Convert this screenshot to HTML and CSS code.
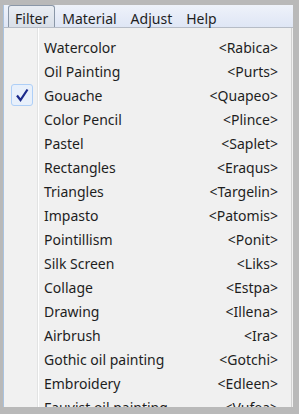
FILE: index.html
```html
<html>
  <head>
    <title>Filter menu</title>
    <link rel="stylesheet" href="styles.css">
  </head>
  <body>
    <div class="window">
      <div class="menubar">
        <span class="menubar_item menubar_open">Filter</span>
        <span class="menubar_item">Material</span>
        <span class="menubar_item">Adjust</span>
        <span class="menubar_item">Help</span>
      </div>
      <div class="menu">
        <div class="menu_row"><span class="menu_check"></span><span class="menu_label">Watercolor</span><span class="menu_key">&lt;Rabica&gt;</span></div>
        <div class="menu_row"><span class="menu_check"></span><span class="menu_label">Oil Painting</span><span class="menu_key">&lt;Purts&gt;</span></div>
        <div class="menu_row"><span class="menu_check menu_checked">
          <svg width="14" height="14" viewBox="0 0 14 14"><path d="M2 7.5 L5.5 12 L12.5 1.5" fill="none" stroke="#1c2a8c" stroke-width="2.2" stroke-linejoin="miter"/></svg>
        </span><span class="menu_label">Gouache</span><span class="menu_key">&lt;Quapeo&gt;</span></div>
        <div class="menu_row"><span class="menu_check"></span><span class="menu_label">Color Pencil</span><span class="menu_key">&lt;Plince&gt;</span></div>
        <div class="menu_row"><span class="menu_check"></span><span class="menu_label">Pastel</span><span class="menu_key">&lt;Saplet&gt;</span></div>
        <div class="menu_row"><span class="menu_check"></span><span class="menu_label">Rectangles</span><span class="menu_key">&lt;Eraqus&gt;</span></div>
        <div class="menu_row"><span class="menu_check"></span><span class="menu_label">Triangles</span><span class="menu_key">&lt;Targelin&gt;</span></div>
        <div class="menu_row"><span class="menu_check"></span><span class="menu_label">Impasto</span><span class="menu_key">&lt;Patomis&gt;</span></div>
        <div class="menu_row"><span class="menu_check"></span><span class="menu_label">Pointillism</span><span class="menu_key">&lt;Ponit&gt;</span></div>
        <div class="menu_row"><span class="menu_check"></span><span class="menu_label">Silk Screen</span><span class="menu_key">&lt;Liks&gt;</span></div>
        <div class="menu_row"><span class="menu_check"></span><span class="menu_label">Collage</span><span class="menu_key">&lt;Estpa&gt;</span></div>
        <div class="menu_row"><span class="menu_check"></span><span class="menu_label">Drawing</span><span class="menu_key">&lt;Illena&gt;</span></div>
        <div class="menu_row"><span class="menu_check"></span><span class="menu_label">Airbrush</span><span class="menu_key">&lt;Ira&gt;</span></div>
        <div class="menu_row"><span class="menu_check"></span><span class="menu_label">Gothic oil painting</span><span class="menu_key">&lt;Gotchi&gt;</span></div>
        <div class="menu_row"><span class="menu_check"></span><span class="menu_label">Embroidery</span><span class="menu_key">&lt;Edleen&gt;</span></div>
        <div class="menu_row"><span class="menu_check"></span><span class="menu_label">Fauvist oil painting</span><span class="menu_key">&lt;Vufea&gt;</span></div>
      </div>
    </div>
  </body>
</html>
```
FILE: styles.css
```css
body
  {
  margin: 0;
  background: #b9b9b9;
  font-family: "Noto Sans", "Liberation Sans", sans-serif;
  font-size: 14px;
  color: #1e1e1e;
  }

.window
  {
  margin: 5px 6px 0 3px;
  height: 402px;
  overflow: hidden;
  border-left: 1px solid #a9c3e0;
  background: #f0f0f0;
  display: flex;
  flex-direction: column;
  }

.menubar
  {
  height: 25px;
  display: flex;
  align-items: flex-end;
  padding-left: 4px;
  background: linear-gradient(#eef2fa, #dfe6f5);
  border-bottom: 1px solid #b6bcc6;
  }

.menubar_item
  {
  height: 18px;
  line-height: 20px;
  padding: 3px 6px 0 6px;
  border: 1px solid transparent;
  border-bottom: none;
  }

.menubar_open
  {
  border: 1px solid #8a97a8;
  border-bottom: none;
  border-radius: 3px 3px 0 0;
  background: linear-gradient(#e9edf3, #d9dfe8);
  }

.menu
  {
  flex: 1;
  margin-right: 1px;
  border-right: 1px solid #d0d0d0;
  padding-top: 7px;
  background: linear-gradient(to right, #f1f1f1 33px, #e2e3e3 33px, #e2e3e3 34px, #ffffff 34px, #ffffff 35px, #f0f0f0 35px);
  }

.menu_row
  {
  height: 24px;
  display: flex;
  align-items: center;
  }

.menu_check
  {
  width: 22px;
  height: 22px;
  margin: 0 11px 0 7px;
  box-sizing: border-box;
  display: flex;
  align-items: center;
  justify-content: center;
  }

.menu_checked
  {
  border: 1px solid #aecff7;
  border-radius: 3px;
  background: #e8f0fb;
  }

.menu_label
  {
  flex: 1;
  }

.menu_key
  {
  margin-right: 13px;
  }
```
